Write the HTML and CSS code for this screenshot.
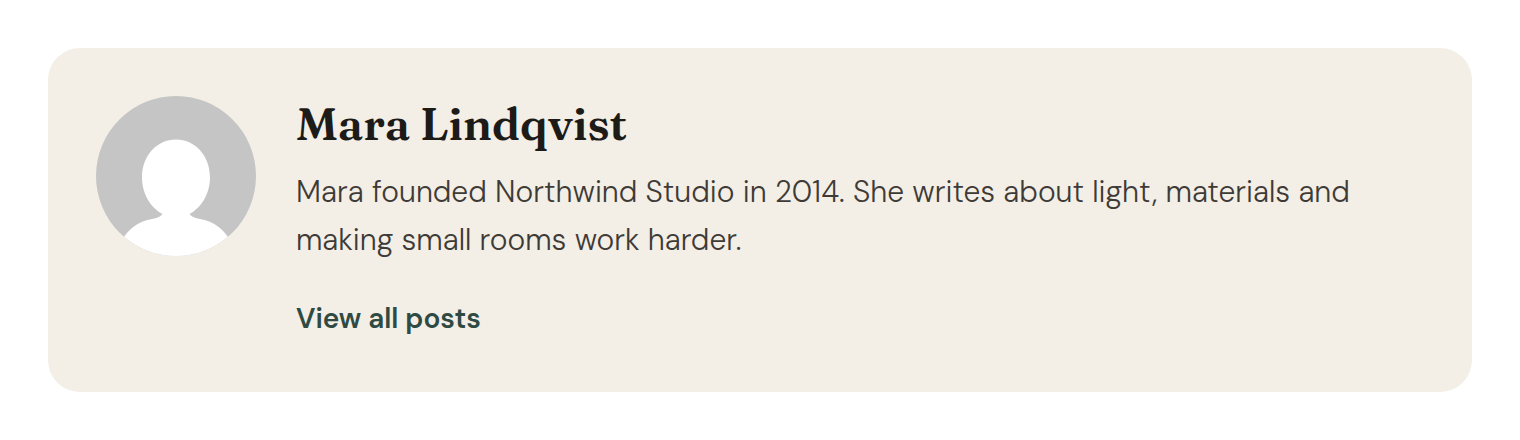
FILE: index.html
```html
<!DOCTYPE html>
<html lang="en">
<head>
    <meta charset="UTF-8">
    <meta name="viewport" content="width=device-width, initial-scale=1.0">
    <title>Mara Lindqvist</title>
    <link rel="stylesheet" href="styles.css">
</head>
<body>
    <section class="author-box">
        <svg class="author-avatar" viewBox="0 0 160 160" role="img" aria-label="Mara Lindqvist">
            <rect width="160" height="160" fill="#c5c5c5"/>
            <path fill="#fff" d="M80 43.500C61 43.500 46 59.500 46 81.500C46 98 55 112 66.500 118C64 121 61 122 56 123C43 125 34 132 28 141V160H132V141C126 132 117 125 104 123C99 122 96 121 93.500 118C105 112 114 98 114 81.500C114 59.500 99 43.500 80 43.500Z"/>
        </svg>
        <div class="author-content">
            <h2 class="author-name">Mara Lindqvist</h2>
            <p class="author-bio">Mara founded Northwind Studio in 2014. She writes about light, materials and making small rooms work harder.</p>
            <a class="author-link" href="#">View all posts</a>
        </div>
    </section>
</body>
</html>
```

FILE: styles.css
```css
:root {
    --box-color: #f3eee6;
    --heading-color: #1c1b18;
    --text-color: #3e3b37;
    --link-color: #2f4a43;
}

* {
    margin: 0;
    padding: 0;
    box-sizing: border-box;
}

body {
    padding: 48px;
    background: #fff;
    font-family: "DM Sans", "Open Sans", sans-serif;
}

.author-box {
    display: flex;
    align-items: flex-start;
    gap: 40px;
    padding: 48px;
    border-radius: 32px;
    background: var(--box-color);
}

.author-avatar {
    flex: none;
    width: 160px;
    height: 160px;
    border-radius: 50%;
}

.author-content {
    flex: 1;
}

.author-name {
    margin-bottom: 16px;
    font-family: Fraunces, "Liberation Serif", serif;
    font-size: 45px;
    font-weight: 600;
    line-height: 56px;
    color: var(--heading-color);
}

.author-bio {
    margin-bottom: 32px;
    font-size: 30px;
    font-weight: 300;
    line-height: 48px;
    color: var(--text-color);
}

.author-link {
    display: inline-block;
    padding-bottom: 2px;
    font-size: 28px;
    font-weight: 600;
    line-height: 46px;
    color: var(--link-color);
    text-decoration: none;
}
```
